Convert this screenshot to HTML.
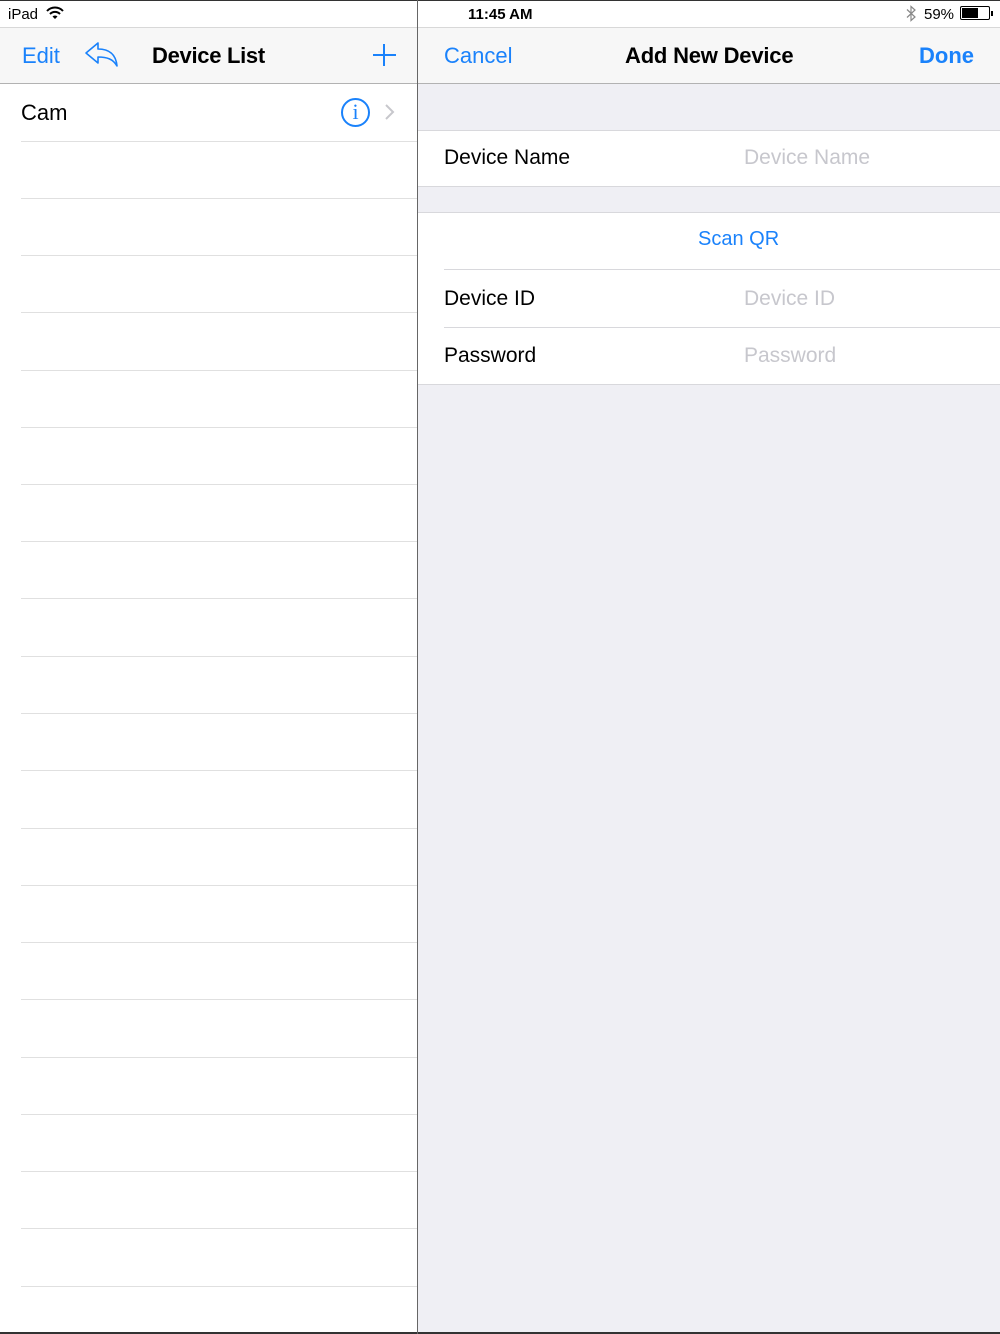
<!DOCTYPE html>
<html><head><meta charset="utf-8"><style>
*{margin:0;padding:0;box-sizing:border-box}
body{width:1000px;height:1334px;position:relative;overflow:hidden;background:#fff;font-family:"Liberation Sans",sans-serif;}
.a{position:absolute}
.t{position:absolute;white-space:nowrap}
.sep{position:absolute;left:21px;width:396px;height:1px;background:#e0e0e0}
.blue{color:#1a82fb}
</style></head><body>
<div class="a" style="left:0;top:0;width:1000px;height:1px;background:#333"></div>
<div class="a" style="left:0;top:1332px;width:1000px;height:2px;background:#333"></div>
<div class="t" style="left:8px;top:6px;font-size:15px;color:#000">iPad</div>
<svg class="a" style="left:46px;top:6px" width="18" height="14" viewBox="0 0 18 14"><path d="M1 5 A11 11 0 0 1 17 5" stroke="#000" stroke-width="2" fill="none"/><path d="M4 8 A7 7 0 0 1 14 8" stroke="#000" stroke-width="2" fill="none"/><path d="M9 13 L6.5 10.5 A3.5 3.5 0 0 1 11.5 10.5 Z" fill="#000"/></svg>
<div class="t" style="left:468px;top:6px;font-size:15px;font-weight:bold;color:#000">11:45 AM</div>
<svg class="a" style="left:905px;top:5px" width="12" height="17" viewBox="0 0 12 17"><path d="M2 4.5 L10 12 L6 15.5 V1.5 L10 5 L2 12.5" stroke="#888" stroke-width="1.2" fill="none"/></svg>
<div class="t" style="left:924px;top:6px;font-size:15px;color:#000">59%</div>
<div class="a" style="left:960px;top:6px;width:30px;height:14px;border:1.2px solid #000;border-radius:2px"></div>
<div class="a" style="left:962px;top:8px;width:16px;height:10px;background:#000"></div>
<div class="a" style="left:991px;top:11px;width:2px;height:5px;background:#000"></div>
<div class="a" style="left:0;top:27px;width:1000px;height:57px;background:#f7f7f7;border-top:1px solid #d8d8d8"></div>
<div class="a" style="left:0;top:83px;width:1000px;height:1px;background:#b2b2b2"></div>
<div class="t blue" style="left:22px;top:43px;font-size:22px">Edit</div>
<svg class="a" style="left:84px;top:40px" width="36" height="28" viewBox="0 0 36 28"><path d="M2 13 L14 3 V9 C26 9 32 15 33 26 C29 19 23 17 14 17 V23 Z" stroke="#1a82fb" stroke-width="1.6" fill="none" stroke-linejoin="round"/></svg>
<div class="t" style="left:152px;top:43px;font-size:22px;font-weight:bold;color:#000;letter-spacing:-0.3px">Device List</div>
<div class="a" style="left:373px;top:54px;width:23px;height:2px;background:#1a82fb"></div>
<div class="a" style="left:383px;top:44px;width:2px;height:22px;background:#1a82fb"></div>
<div class="t blue" style="left:444px;top:43px;font-size:22px">Cancel</div>
<div class="t" style="left:625px;top:43px;font-size:22px;font-weight:bold;color:#000;letter-spacing:-0.2px">Add New Device</div>
<div class="t blue" style="left:919px;top:43px;font-size:22px;font-weight:bold">Done</div>
<div class="t" style="left:21px;top:100px;font-size:22px;color:#000">Cam</div>
<div class="a" style="left:341px;top:98px;width:29px;height:29px;border:2px solid #1a82fb;border-radius:50%"></div>
<div class="t" style="left:341px;top:99px;width:29px;text-align:center;font-family:'Liberation Serif',serif;font-size:22px;color:#1a82fb">i</div>
<svg class="a" style="left:384px;top:103px" width="12" height="18" viewBox="0 0 12 18"><path d="M2 2 L9 9 L2 16" stroke="#c7c7cc" stroke-width="2" fill="none"/></svg>
<div class="sep" style="top:141px"></div><div class="sep" style="top:198px"></div><div class="sep" style="top:255px"></div><div class="sep" style="top:312px"></div><div class="sep" style="top:370px"></div><div class="sep" style="top:427px"></div><div class="sep" style="top:484px"></div><div class="sep" style="top:541px"></div><div class="sep" style="top:598px"></div><div class="sep" style="top:656px"></div><div class="sep" style="top:713px"></div><div class="sep" style="top:770px"></div><div class="sep" style="top:828px"></div><div class="sep" style="top:885px"></div><div class="sep" style="top:942px"></div><div class="sep" style="top:999px"></div><div class="sep" style="top:1057px"></div><div class="sep" style="top:1114px"></div><div class="sep" style="top:1171px"></div><div class="sep" style="top:1228px"></div><div class="sep" style="top:1286px"></div>
<div class="a" style="left:418px;top:84px;width:582px;height:1248px;background:#efeff4"></div>
<div class="a" style="left:417px;top:0;width:1px;height:1334px;background:#666"></div>
<div class="a" style="left:418px;top:130px;width:582px;height:57px;background:#fff;border-top:1px solid #d8d8dc;border-bottom:1px solid #d8d8dc"></div>
<div class="t" style="left:444px;top:146px;font-size:21px;color:#000">Device Name</div>
<div class="t" style="left:744px;top:146px;font-size:21px;color:#c7c7cd">Device Name</div>
<div class="a" style="left:418px;top:212px;width:582px;height:173px;background:#fff;border-top:1px solid #d8d8dc;border-bottom:1px solid #d8d8dc"></div>
<div class="t blue" style="left:698px;top:228px;font-size:20px">Scan QR</div>
<div class="a" style="left:444px;top:269px;width:556px;height:1px;background:#d8d8dc"></div>
<div class="t" style="left:444px;top:287px;font-size:21px;color:#000">Device ID</div>
<div class="t" style="left:744px;top:287px;font-size:21px;color:#c7c7cd">Device ID</div>
<div class="a" style="left:444px;top:327px;width:556px;height:1px;background:#d8d8dc"></div>
<div class="t" style="left:444px;top:344px;font-size:21px;color:#000">Password</div>
<div class="t" style="left:744px;top:344px;font-size:21px;color:#c7c7cd">Password</div>
</body></html>
